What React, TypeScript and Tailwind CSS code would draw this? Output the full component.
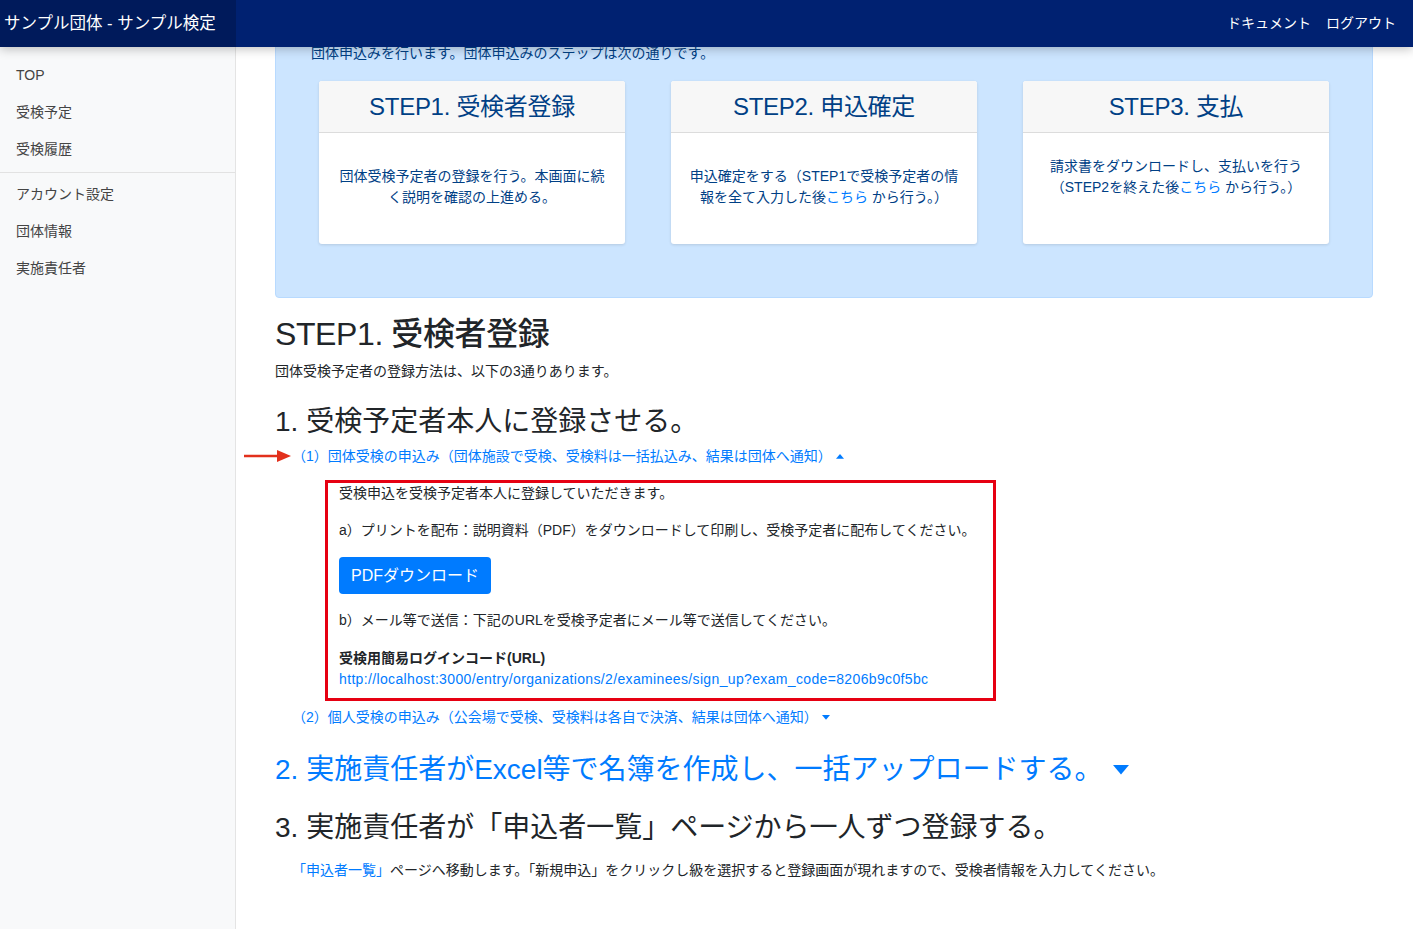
import React from 'react';

const font = { fontFamily: '"Liberation Sans", "Noto Sans CJK JP", sans-serif' };

const Triangle: React.FC<{ up?: boolean; size?: number }> = ({ up, size = 8 }) => (
  <svg width={size} height={size * 0.6} viewBox="0 0 10 6" className="inline-block">
    {up ? <path d="M0 6 L5 0 L10 6 Z" fill="#007bff" /> : <path d="M0 0 L10 0 L5 6 Z" fill="#007bff" />}
  </svg>
);

const StepCard: React.FC<{ title: string; children: React.ReactNode }> = ({ title, children }) => (
  <div className="bg-white rounded-[3px] shadow-[0_1px_3px_rgba(0,0,0,0.12)] flex flex-col h-[163px]">
    <div className="h-[52px] bg-[#f7f7f7] border-b border-[#dcdcdc] rounded-t-[3px] flex items-center justify-center text-[24px] text-[#004085] tracking-[-0.3px]">
      {title}
    </div>
    <div className="flex-1 flex flex-col justify-center items-center px-[12px] pb-[3px] text-[14px] leading-[21px] text-[#004085] text-center whitespace-nowrap">
      {children}
    </div>
  </div>
);

const App: React.FC = () => {
  return (
    <div className="h-[929px] flex flex-col overflow-hidden bg-white text-[#212529]" style={font}>
      {/* Header */}
      <header className="relative z-10 h-[47px] flex bg-[#002171] shadow-[0_2px_10px_rgba(0,0,0,0.25)]">
        <div className="w-[236px] bg-[#001a5b] flex items-center pl-[4px] text-white text-[16.5px] font-normal">
          サンプル団体 - サンプル検定
        </div>
        <nav className="flex-1 flex items-center justify-end gap-[15px] pr-[17px] text-white text-[14px]">
          <span>ドキュメント</span>
          <span>ログアウト</span>
        </nav>
      </header>

      <div className="flex flex-1 min-h-0">
        {/* Sidebar */}
        <aside className="w-[236px] shrink-0 bg-[#f8f9fa] border-r border-[#e4e4e4] text-[14px] text-[#444]">
          <ul className="pt-[10px] pb-[4px] border-b border-[#e2e2e2]">
            <li className="px-[16px] py-[8px] leading-[21px]">TOP</li>
            <li className="px-[16px] py-[8px] leading-[21px]">受検予定</li>
            <li className="px-[16px] py-[8px] leading-[21px]">受検履歴</li>
          </ul>
          <ul className="pt-[3px]">
            <li className="px-[16px] py-[8px] leading-[21px]">アカウント設定</li>
            <li className="px-[16px] py-[8px] leading-[21px]">団体情報</li>
            <li className="px-[16px] py-[8px] leading-[21px]">実施責任者</li>
          </ul>
        </aside>

        {/* Main */}
        <main className="relative flex-1 overflow-hidden pl-[39px] pr-[40px]">
          <div className="-mt-[17px] bg-[#cce5ff] border border-[#b8daff] rounded-[4px] px-[35px] pt-[12px] pb-[53px]">
            <p className="text-[14px] leading-[21px] text-[#004085]">
              団体申込みを行います。団体申込みのステップは次の通りです。
            </p>
            <div className="grid grid-cols-3 gap-[46px] mx-[8px] mt-[17px]">
              <StepCard title="STEP1. 受検者登録">
                <p>
                  団体受検予定者の登録を行う。本画面に続
                  <br />
                  く説明を確認の上進める。
                </p>
              </StepCard>
              <StepCard title="STEP2. 申込確定">
                <p>
                  申込確定をする（STEP1で受検予定者の情
                  <br />
                  報を全て入力した後<span className="text-[#007bff]">こちら</span> から行う。）
                </p>
              </StepCard>
              <StepCard title="STEP3. 支払">
                <p>
                  請求書をダウンロードし、支払いを行う
                  <br />
                  （STEP2を終えた後<span className="text-[#007bff]">こちら</span> から行う。）
                  <br />
                  &nbsp;
                </p>
              </StepCard>
            </div>
          </div>

          <h2 className="mt-[17px] text-[32px] leading-[38px] font-medium tracking-[-0.4px]">STEP1. 受検者登録</h2>
          <p className="mt-[8px] text-[14px] leading-[21px]">団体受検予定者の登録方法は、以下の3通りあります。</p>

          <h3 className="mt-[23px] text-[28px] leading-[34px]">1. 受検予定者本人に登録させる。</h3>

          <div className="mt-[7px] pl-[17px] text-[14px] leading-[21px] text-[#007bff] flex items-center gap-[4px]">
            <span>（1）団体受検の申込み（団体施設で受検、受検料は一括払込み、結果は団体へ通知）</span>
            <Triangle up />
          </div>
          {/* annotation arrow */}
          <svg className="absolute left-[8px] top-[402px]" width="48" height="14" viewBox="0 0 48 14">
            <line x1="0" y1="7" x2="36" y2="7" stroke="#e2301c" strokeWidth="2.4" />
            <path d="M33 1 L47 7 L33 13 Z" fill="#e2301c" />
          </svg>

          <div className="ml-[50px] mt-[13px] w-[671px] border-[3px] border-[#e60012] px-[11px] pb-[8px] text-[14px] leading-[21px]">
            <p>受検申込を受検予定者本人に登録していただきます。</p>
            <p className="mt-[16px]">a）プリントを配布：説明資料（PDF）をダウンロードして印刷し、受検予定者に配布してください。</p>
            <button className="mt-[16px] h-[37px] px-[12px] bg-[#007bff] rounded-[4px] text-white text-[16px]">
              PDFダウンロード
            </button>
            <p className="mt-[16px]">b）メール等で送信：下記のURLを受検予定者にメール等で送信してください。</p>
            <p className="mt-[17px] font-bold">受検用簡易ログインコード(URL)</p>
            <p className="text-[#007bff] tracking-[0.35px]">
              http://localhost:3000/entry/organizations/2/examinees/sign_up?exam_code=8206b9c0f5bc
            </p>
          </div>

          <div className="mt-[6px] pl-[17px] text-[14px] leading-[21px] text-[#007bff] flex items-center gap-[4px]">
            <span>（2）個人受検の申込み（公会場で受検、受検料は各自で決済、結果は団体へ通知）</span>
            <Triangle />
          </div>

          <h3 className="mt-[25px] text-[28px] leading-[34px] text-[#007bff] flex items-center gap-[10px]">
            <span>2. 実施責任者がExcel等で名簿を作成し、一括アップロードする。</span>
            <Triangle size={16} />
          </h3>

          <h3 className="mt-[24px] text-[28px] leading-[34px]">3. 実施責任者が「申込者一覧」ページから一人ずつ登録する。</h3>

          <p className="mt-[15px] pl-[17px] text-[14px] leading-[21px]">
            <span className="text-[#007bff]">「申込者一覧」</span>ページへ移動します。「新規申込」をクリックし級を選択すると登録画面が現れますので、受検者情報を入力してください。
          </p>
        </main>
      </div>
    </div>
  );
};

export default App;
